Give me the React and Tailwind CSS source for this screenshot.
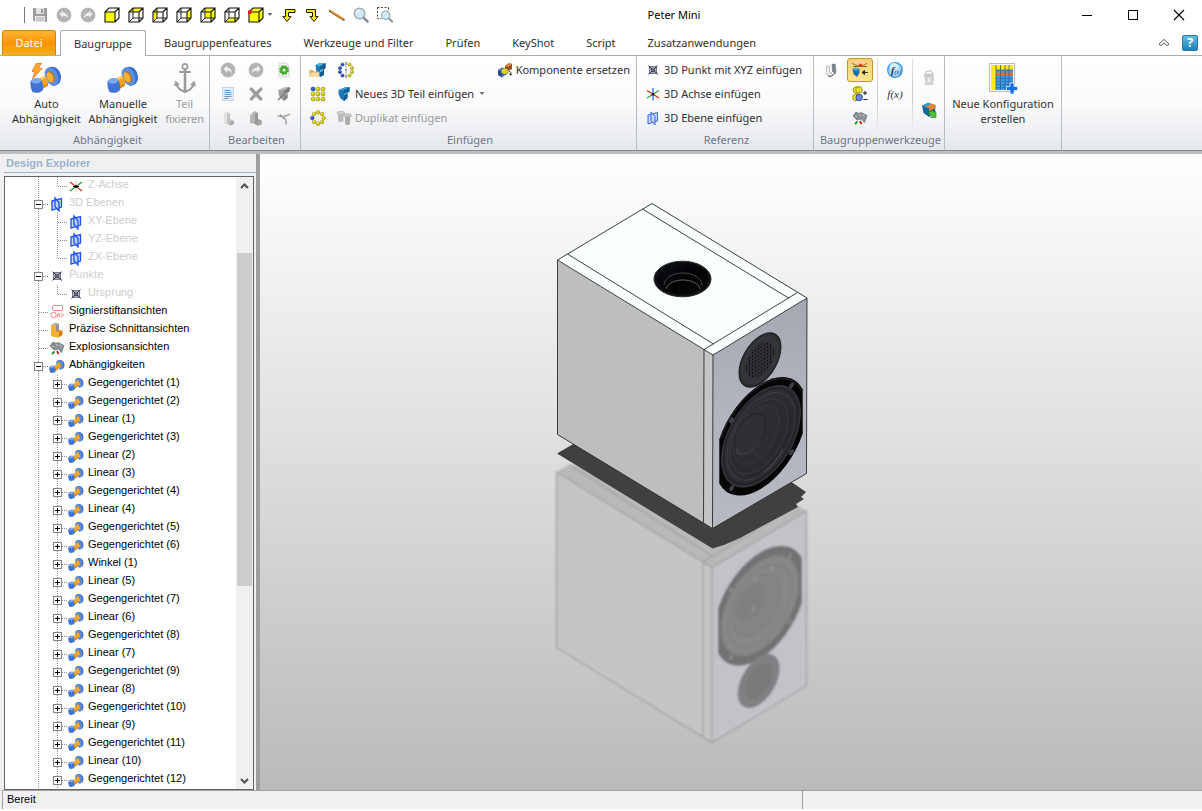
import React from "react";

/* ---------- quick access icons ---------- */

const CUBE_FACES = {
  front: "1,5 11,5 11,15 1,15",
  top: "1,5 5,1 15,1 11,5",
  left: "1,5 5,1 5,11 1,15",
  right: "11,5 15,1 15,11 11,15",
  back: "5,1 15,1 15,11 5,11",
  bottom: "1,15 5,11 15,11 11,15",
};

function CubeIcon({ face, solid, dot }) {
  return (
    <svg width="16" height="16" viewBox="0 0 16 16" aria-hidden="true">
      {solid && <polygon points="1,5 5,1 15,1 15,11 11,15 1,15" fill="#ffff00" />}
      <polygon points={CUBE_FACES[face]} fill="#ffff00" />
      <g fill="none" stroke="#111" strokeWidth="1.1">
        <path d="M1 5h10v10H1zM1 5l4-4h10v10l-4 4M11 5l4-4" />
        {!solid && face !== "front" && <path d="M5 1v10h10M5 11l-4 4" strokeWidth="0.9" />}
      </g>
      {dot && <rect x="0" y="3.5" width="3.5" height="3.5" fill="#ff1010" />}
    </svg>
  );
}

function SaveIcon() {
  return (
    <svg width="16" height="16" viewBox="0 0 16 16" aria-hidden="true">
      <path d="M1 1h14v14H3l-2-2z" fill="#9c9c9c" />
      <rect x="4" y="1" width="8" height="6" fill="#e4e4e4" />
      <rect x="9" y="2" width="2" height="4" fill="#9c9c9c" />
      <rect x="3" y="9" width="10" height="6" fill="#e8e8e8" />
      <path d="M4 11h8M4 13h8" stroke="#aaa" />
    </svg>
  );
}

function UndoIcon({ flip }) {
  return (
    <svg width="16" height="16" viewBox="0 0 16 16" aria-hidden="true">
      <circle cx="8" cy="8" r="7" fill="#b3b3b3" stroke="#a4a4a4" strokeWidth="0.6" />
      <path
        d={flip ? "M12.5 7 9 3.5v2.2C5.800 5.700 4 8 4.300 11.500 5.500 9.300 6.800 8.500 9 8.500v2.200z" : "M3.500 7 7 3.500v2.200c3.200 0 5 2.300 4.700 5.800C10.500 9.300 9.200 8.500 7 8.500v2.200z"}
        fill="#f1f1f1"
      />
    </svg>
  );
}

function TurnArrow({ flip }) {
  return (
    <svg width="16" height="16" viewBox="0 0 16 16" aria-hidden="true">
      <path
        d={flip ? "M1.500 2.500h9v7h2.500L9 14.500 5 9.500h2.500V5.500h-6z" : "M14 2.500H4.500v7H2L6 14.500l4-5H7.500V5.500H14z"}
        fill="#ffee00"
        stroke="#1a1a00"
      />
    </svg>
  );
}

function StickIcon() {
  return (
    <svg width="16" height="16" viewBox="0 0 16 16" aria-hidden="true">
      <path d="M1 4 14.500 12.500" stroke="#8f5b14" strokeWidth="2.400" strokeLinecap="round" />
      <path d="M1.300 3.700 14.300 12" stroke="#f0a93c" strokeWidth="1.200" />
    </svg>
  );
}

function LensIcon({ marquee }) {
  return (
    <svg width="16" height="16" viewBox="0 0 16 16" aria-hidden="true">
      {marquee && <path d="M.5 .5h11M.5 .5v11h4M11.500 .5v3" fill="none" stroke="#444" strokeDasharray="2 1.500" />}
      <g transform={marquee ? "translate(3.500 3) scale(.8)" : undefined}>
        <path d="m10 10 4.500 4.500" stroke="#8d9196" strokeWidth="2.600" strokeLinecap="round" />
        <circle cx="6.500" cy="6.500" r="5.200" fill="#cfeaf8" stroke="#9fa9b2" strokeWidth="1.500" />
        <path d="M4 6a3 3 0 0 1 3-3" fill="none" stroke="#fff" strokeWidth="1.200" />
      </g>
    </svg>
  );
}

/* ---------- ribbon icons ---------- */

function ConstraintIcon({ size = 32, bolt }) {
  return (
    <svg width={size} height={size} viewBox="0 0 32 32" aria-hidden="true">
      <path d="M16.500 7C19 3 25 2.500 28.500 7c3 4 3.500 10 .5 13.500-1.500 1.800-4 2-6.500 2.500z" fill="#3a6fd0" />
      <ellipse cx="21.500" cy="13.500" rx="6.300" ry="9.600" transform="rotate(-24 21.500 13.500)" fill="#5a8de6" />
      <ellipse cx="20.800" cy="14" rx="3.800" ry="6" transform="rotate(-24 20.800 14)" fill="#b97a1a" />
      <ellipse cx="20" cy="14.300" rx="2.900" ry="5.300" transform="rotate(-24 20 14.300)" fill="#f8b035" />
      <path d="M9 15.500 14.500 13c3 1.500 4.500 5.500 3.500 9.500L12.500 25z" fill="#f5a31c" />
      <path d="M9 15.500 14.500 13l1.800 1.500L10.500 17.500z" fill="#ffca62" />
      <path d="m12.500 23.500 5.500-3v2L12.500 26z" fill="#cf8412" />
      <path d="M.5 18.500C3 15 9 14 11.500 17.500c1.500 3 2 6.500 1.500 9.500C10.500 30 5.500 30.500 2.500 29 .8 26 .2 22 .5 18.500z" fill="#3f74d4" />
      <path d="M.5 18.500C3 15 9 14 11.500 17.500 10 21 4 22 .5 18.500z" fill="#7ca6f0" />
      {bolt && <path d="M6.500 0 11.500 0 8.500 5l3.500.5L2.500 16 5 8.500 2 8.500z" fill="#ffa630" stroke="#ee7420" strokeWidth=".8" />}
    </svg>
  );
}

function AnchorIcon() {
  return (
    <svg width="32" height="32" viewBox="0 0 32 32" fill="none" stroke="#9b9b9b" aria-hidden="true">
      <circle cx="16" cy="3.500" r="2.600" strokeWidth="1.600" />
      <path d="M11 9h10" strokeWidth="2" strokeLinecap="round" />
      <path d="M16 6v23" strokeWidth="2.600" />
      <path d="M7 20c1 5 4.500 7.500 9 9 4.500-1.500 8-4 9-9" strokeWidth="2" />
      <path d="m5.500 23 1-5 4 3.500zM26.500 23l-1-5-4 3.500z" fill="#9b9b9b" strokeWidth=".6" />
    </svg>
  );
}

function GearDocIcon() {
  return (
    <svg width="16" height="16" viewBox="0 0 16 16" aria-hidden="true">
      <path d="M3 1h7l3 3v11H3z" fill="#eef1ee" stroke="#d2d6d2" strokeWidth=".8" />
      <circle cx="8" cy="8" r="2.700" fill="none" stroke="#3fae2c" strokeWidth="2.400" />
      <circle cx="8" cy="8" r="4.200" fill="none" stroke="#3fae2c" strokeWidth="1.400" strokeDasharray="2 1.300" />
      <circle cx="8" cy="8" r="1.200" fill="#dff5da" />
    </svg>
  );
}

function ListDocIcon() {
  return (
    <svg width="16" height="16" viewBox="0 0 16 16" aria-hidden="true">
      <rect x="2.500" y="1.500" width="11" height="13" fill="#e3edf7" stroke="#c9d5e2" />
      <path d="M4.500 4.500h6M4.500 6.500h7M4.500 8.500h7M4.500 10.500h7M4.500 12.500h4" stroke="#6b95c2" />
    </svg>
  );
}

function DeleteIcon() {
  return (
    <svg width="16" height="16" viewBox="0 0 16 16" aria-hidden="true">
      <path d="M1 3 3.500 1l4.500 4.500L13 1l2 2L10.500 8l4.500 5-2.500 2-4.500-4.500L3.500 15l-2-2L5.500 8z" fill="#9d9d9d" />
    </svg>
  );
}

function PartIcon({ tone = "gray", slash }) {
  const c = tone === "blue" ? ["#3fa0d8", "#1f78b4", "#145a8c"] : ["#bdbdbd", "#a0a0a0", "#868686"];
  return (
    <svg width="16" height="16" viewBox="0 0 16 16" aria-hidden="true">
      <path d="m2.500 4 6-2.500L13.500 1v4.500L11.500 7v5L8 15l-3.500-2.500L2.500 8z" fill={c[1]} />
      <path d="m2.500 4 6-2.500L13.500 1 7.500 4.500z" fill={c[0]} />
      <path d="M7.500 4.500 13.500 1v4.500L10.500 7v1l1-.5V12L8 15z" fill={c[2]} />
      <path d="m8 7.500 3-1.500v2L8 9.500z" fill={c[0]} />
      {slash && <path d="m2 14 12-12" stroke="#777" strokeWidth="1.300" />}
    </svg>
  );
}

function BodyIcon({ dark }) {
  return (
    <svg width="16" height="16" viewBox="0 0 16 16" aria-hidden="true">
      <path d="m4 3 3-2 3 2v6l4 2v3l-4 1.500L4 13z" fill={dark ? "#b4b4b4" : "#e2e2e2"} />
      <path d="m7 4 3-1v6l4 2v3l-4 1.500-3-1.500z" fill={dark ? "#989898" : "#c4c4c4"} />
      <path d="m10 11 4 0v3l-4 1.500z" fill="#ababab" />
      {dark && <path d="M4 4v10l-2-1V5z" fill="#bbb" />}
    </svg>
  );
}

function BranchIcon() {
  return (
    <svg width="16" height="16" viewBox="0 0 16 16" fill="none" stroke="#969696" strokeWidth="1.300" aria-hidden="true">
      <path d="M1.500 5.500C5.500 7.500 9 7 14 4M6 7l4 3v4.500M4 4.500l3 3" />
      <circle cx="7.500" cy="7.300" r="1.200" fill="#ccc" strokeWidth=".8" />
    </svg>
  );
}

function OpenPartIcon() {
  return (
    <svg width="18" height="16" viewBox="0 0 18 16" aria-hidden="true">
      <path d="m6.500 3 4.500-2 5.500 0v5L15 7.500V13l-4 2-3.500-4z" fill="#1f78b4" />
      <path d="m6.500 3 4.500-2h5.500L11 4.500z" fill="#4bb0e2" />
      <path d="M11 4.500 16.500 1v5L15 7.500V13l-4 2z" fill="#145a8c" />
      <path d="m11 8 3-1.500V9l-3 1.500z" fill="#59b7e8" />
      <path d="M.5 8h3.500l1 1.500h5V15H.5z" fill="#e2ae5e" />
      <path d="M.5 15 2 10.500h8.500L10 15z" fill="#f9dba0" />
    </svg>
  );
}

function Ball({ x, y, blue, r = 2 }) {
  return (
    <g>
      <circle cx={x} cy={y} r={r} fill={blue ? "#1d3fb4" : "#c9be00"} stroke={blue ? "#14307e" : "#857c00"} strokeWidth=".5" />
      <circle cx={x - 0.4} cy={y - 0.5} r={r / 2} fill={blue ? "#5d82e8" : "#fbf23a"} />
    </g>
  );
}

function MirrorIcon() {
  const pts = [[4.500, 2.500], [2, 6], [2, 10], [4.500, 13.500]];
  return (
    <svg width="16" height="16" viewBox="0 0 16 16" aria-hidden="true">
      {pts.map(([x, y]) => <Ball key={"l" + y} x={x} y={y} blue r={1.6} />)}
      {pts.map(([x, y]) => <Ball key={"r" + y} x={16 - x} y={y} r={1.6} />)}
      <path d="M8 0v16" stroke="#333" strokeWidth=".9" strokeDasharray="3 1.200 1 1.200" />
    </svg>
  );
}

function GridPatternIcon() {
  const at = [3, 8, 13];
  return (
    <svg width="16" height="16" viewBox="0 0 16 16" aria-hidden="true">
      {at.flatMap((y) => at.map((x) => <Ball key={x + "-" + y} x={x} y={y} blue={x === 3 && y === 3} />))}
    </svg>
  );
}

function RingPatternIcon() {
  const pts = [[8, 2.300], [12, 4], [13.700, 8], [12, 12], [8, 13.700], [4, 12], [2.300, 8], [4, 4]];
  return (
    <svg width="16" height="16" viewBox="0 0 16 16" aria-hidden="true">
      {pts.map(([x, y], i) => <Ball key={i} x={x} y={y} blue={i === 6} r={1.8} />)}
    </svg>
  );
}

function DuplicateIcon() {
  return (
    <svg width="16" height="16" viewBox="0 0 16 16" aria-hidden="true">
      <path d="M2 3v8c1.500 1.500 4.500 1.500 5.500 0V3z" fill="#bdbdbd" />
      <ellipse cx="4.800" cy="3" rx="4" ry="1.800" fill="#cfcfcf" stroke="#adadad" strokeWidth=".6" />
      <path d="M9 6v8c1.300 1.200 4 1.200 5 0V6z" fill="#ababab" />
      <ellipse cx="11.500" cy="5.500" rx="4" ry="1.800" fill="#c9c9c9" stroke="#a1a1a1" strokeWidth=".6" />
    </svg>
  );
}

function ReplaceIcon() {
  return (
    <svg width="16" height="16" viewBox="0 0 16 16" aria-hidden="true">
      <path d="m8 4 4-3 3 1v5l-4 2-3-2z" fill="#9d4d1d" />
      <path d="m8 4 4-3 3 1-4 3z" fill="#d98846" />
      <path d="m1 8 4-2.500L10 7v5l-5 3.500L1 13z" fill="#4a6cc8" />
      <path d="m1 8 4 1.500V15L1 13z" fill="#2b4796" />
      <path d="m4 7.500 4-1.500 3 1.500v3.500L8 12.500 4.500 11z" fill="#d9d72c" stroke="#6b751c" strokeWidth=".6" />
      <path d="M12 9.500c2 0 2.500 1.500 1 3.500m0 0 .3-2m-.3 2 2-.5" stroke="#222" fill="none" strokeWidth=".9" />
    </svg>
  );
}

function PointIcon() {
  return (
    <svg width="16" height="16" viewBox="0 0 16 16" aria-hidden="true">
      <rect x="4.500" y="4.500" width="7" height="7" fill="#a9b4da" stroke="#5d6480" strokeWidth=".8" />
      <path d="m3.500 3.700 9.500 8.800M12.500 3.700 3.500 12.500" stroke="#1b1b1b" strokeWidth=".9" />
      <circle cx="8" cy="8.200" r="1.500" fill="#a9635a" stroke="#282828" strokeWidth=".6" />
    </svg>
  );
}

function AxisIcon() {
  return (
    <svg width="16" height="16" viewBox="0 0 16 16" fill="none" aria-hidden="true">
      <path d="M8 2v12.500" stroke="#3264f0" strokeWidth="1.300" />
      <path d="M2 4.500 8 8.300M8 8.300 14 12" stroke="#e32222" strokeWidth="1.200" />
      <path d="M14 4.500 8 8.300 2 12" stroke="#28993b" strokeWidth="1.200" />
      <circle cx="8" cy="8.300" r="1.200" fill="#111" />
    </svg>
  );
}

function TreeAxisIcon() {
  return (
    <svg width="16" height="16" viewBox="0 0 16 16" fill="none" aria-hidden="true">
      <path d="M8 3v11" stroke="#c9d2ec" />
      <path d="M2 4 14 13" stroke="#e32222" strokeWidth="1.200" />
      <path d="M14 4 2 13" stroke="#28993b" strokeWidth="1.200" />
      <path d="M5 8.500h6" stroke="#111" />
      <circle cx="8" cy="8.500" r="1.600" fill="#111" />
    </svg>
  );
}

function PlaneIcon({ bright }) {
  return (
    <svg width="16" height="16" viewBox="0 0 16 16" aria-hidden="true">
      <g fill="#c3d4fa" stroke={bright ? "#1b50f2" : "#3a6ae0"} strokeWidth={bright ? 1.3 : 1}>
        <path d="M3 5 12.500 2.500v8.500L3 14z" />
        <path d="M6 2v8.500l4 4.500V6.500z" fillOpacity=".7" />
      </g>
    </svg>
  );
}

function FastenersIcon() {
  return (
    <svg width="16" height="16" viewBox="0 0 16 16" aria-hidden="true">
      <path d="M2.500 4v7c0 3 4 4 6 2l-1.500-3c-1 .7-1.500.3-1.500-.5V4z" fill="#ededed" stroke="#b4b4b4" strokeWidth=".8" />
      <path d="M8 2.500 11 2l1 7.500L11 11l-2.500-1.500z" fill="#80868f" stroke="#646a73" strokeWidth=".6" />
      <path d="m4 13.500 2 1.500 6-4.500" fill="none" stroke="#444" strokeWidth=".9" />
    </svg>
  );
}

function LimitIcon() {
  return (
    <svg width="18" height="18" viewBox="0 0 18 18" aria-hidden="true">
      <path d="M1 2c4 3.500 12 3.500 15 0" fill="none" stroke="#9b7420" />
      <path d="M2 5.500h14" stroke="#6a5a20" strokeWidth=".9" />
      <path d="M11 11.500h6M11 11.500l2.500-2v4z" fill="#222" stroke="#222" strokeWidth=".9" />
      <circle cx="9.500" cy="4" r="1.500" fill="#e42f1f" />
      <path d="m1.500 8 3-1.500L8.500 8v4L6 16l-3.500-3z" fill="#1d6dad" />
      <path d="m1.500 8 3-1.500L8.500 8 5 10z" fill="#53a8dd" />
    </svg>
  );
}

function BooleanIcon() {
  return (
    <svg width="16" height="16" viewBox="0 0 16 16" strokeWidth=".9" aria-hidden="true">
      <g fill="#f5ea1c" stroke="#8e8500">
        <circle cx="4.500" cy="4" r="3.300" />
        <circle cx="7" cy="4" r="3.300" fillOpacity=".6" />
      </g>
      <circle cx="4" cy="11.500" r="3.300" fill="#f5ea1c" stroke="#8e8500" />
      <circle cx="7.200" cy="11.500" r="3.300" fill="#6d88e0" stroke="#2f4596" />
      <path d="M11 7h4M13 5v4M11.500 13.500h4" stroke="#222" strokeWidth="1.100" />
    </svg>
  );
}

function ExplodeIcon() {
  return (
    <svg width="16" height="16" viewBox="0 0 16 16" aria-hidden="true">
      <path d="M1 6 4 2l3 1.500 2-1 6 3-2.500 7L9.500 9 5 10z" fill="#8d9299" stroke="#666a70" strokeWidth=".7" />
      <path d="m7 4.500 2 1M10.500 5l2 1" stroke="#d8d8d8" strokeWidth=".8" />
      <circle cx="4" cy="6.500" r="1.200" fill="#ededed" stroke="#444" strokeWidth=".5" />
      <path d="m3 14 2.500-2.500" stroke="#1c9c33" strokeWidth="1.800" />
      <path d="m8 11 1.500 3" stroke="#db2020" strokeWidth="1.800" />
    </svg>
  );
}

function FunctionBadge() {
  return (
    <svg width="18" height="18" viewBox="0 0 18 18" aria-hidden="true">
      <circle cx="9" cy="9" r="7.300" fill="#a5d8fa" stroke="#3d9be6" strokeWidth="1.400" />
      <circle cx="8" cy="6" r="4" fill="#d8f0ff" />
      <text x="5" y="12.500" fontFamily="Liberation Serif, serif" fontStyle="italic" fontWeight="bold" fontSize="10" fill="#20364c">f</text>
      <text x="8.500" y="13" fontFamily="Liberation Serif, serif" fontStyle="italic" fontSize="6" fill="#20364c">(x)</text>
    </svg>
  );
}

function BucketIcon() {
  return (
    <svg width="16" height="18" viewBox="0 0 16 18" aria-hidden="true">
      <path d="M4 7C3 1 12 0 12 6" fill="none" stroke="#c9c9c9" strokeWidth="1.200" />
      <ellipse cx="8" cy="6.500" rx="5" ry="2" fill="#c8c8c8" />
      <path d="M3 7h10v5l-1 1 1 3H3l1.500-3z" fill="#d2d2d2" />
      <path d="M6.500 9h3v4h-3z" fill="#ededed" />
    </svg>
  );
}

function BoxImportIcon() {
  return (
    <svg width="16" height="16" viewBox="0 0 16 16" aria-hidden="true">
      <path d="m1 3.500 6-3 7.500 2.500L8 6z" fill="#3c97c9" />
      <path d="m1 3.500 7 2.500V15L2.500 11z" fill="#1a6698" />
      <path d="m8 6 6.500-3-.5 7-6 5z" fill="#1b5a86" />
      <path d="m4.500 4.700 6-3 4 1.300L8 6zM8 6l6.500-3v3L8 9.500z" fill="#e08636" />
      <path d="M8 10.500c2-2 4-2 5-.5l2-.5v6H9.500l1.500-2c-1-1.500-2-1.500-3-.5z" fill="#48c336" stroke="#2a8b20" strokeWidth=".6" />
    </svg>
  );
}

function ConfigTableIcon() {
  return (
    <svg width="32" height="32" viewBox="0 0 32 32" aria-hidden="true">
      <rect x="2.500" y=".5" width="25" height="28" fill="#fff" stroke="#b9b9b9" />
      <rect x="4" y="2" width="5" height="25" fill="#ffe81a" />
      <rect x="9" y="2" width="17" height="5" fill="#ffe81a" />
      <rect x="9" y="7" width="17" height="20" fill="#3d9ae6" />
      <rect x="9" y="9.500" width="17" height="3" fill="#f4682a" />
      <path d="M9 2v25M13.500 2v25M18 2v25M22 2v25M9 7h17" stroke="#3c6074" strokeWidth=".8" />
      <path d="M9 15.500h17M9 18.500h17M9 21.500h17M9 24.500h17" stroke="#1f75c0" strokeWidth=".8" />
      <path d="M23 20h4v3.500h3.500v4H27V31h-4v-3.500h-3.500v-4H23z" fill="#1a70e2" stroke="#fff" strokeWidth=".7" />
    </svg>
  );
}

function MarkupIcon() {
  return (
    <svg width="16" height="16" viewBox="0 0 16 16" fill="none" stroke="#f0767e" strokeWidth=".9" aria-hidden="true">
      <rect x="3.500" y="1.500" width="10" height="5" rx="1" />
      <circle cx="4.500" cy="11" r="2.700" />
      <path d="m8 13.500 1.500-4.500 1.500 4.500M12 9l2.500 2-2.500 2" />
    </svg>
  );
}

function SectionIcon() {
  return (
    <svg width="16" height="16" viewBox="0 0 16 16" aria-hidden="true">
      <path d="M2.500 3 6 1l4 1v6l3.500 1v4l-4 2.500-7-1.500z" fill="#cf7d0b" />
      <path d="M2.500 3H7v6.500h3v6l-5-.5-2.500-2z" fill="#fbb12c" />
      <path d="M7 3.500 10 2v6L7 9.500z" fill="#8995a6" />
      <path d="m7 9.500 3-1.500 3.500 1L10 10.500z" fill="#e0951f" />
      <path d="m2.500 3 3.500-2 4 1-3 1.500z" fill="#a4afbf" />
    </svg>
  );
}

/* ---------- data ---------- */

const quickTools = [
  ["Speichern", <SaveIcon />],
  ["Rückgängig", <UndoIcon />],
  ["Wiederholen", <UndoIcon flip />],
  ["Vorderansicht", <CubeIcon face="front" />],
  ["Draufsicht", <CubeIcon face="top" />],
  ["Linke Ansicht", <CubeIcon face="left" />],
  ["Rechte Ansicht", <CubeIcon face="right" />],
  ["Rückansicht", <CubeIcon face="back" />],
  ["Unteransicht", <CubeIcon face="bottom" />],
];

const laterTools = [
  ["Zurück drehen", <TurnArrow />],
  ["Vorwärts drehen", <TurnArrow flip />],
  ["Messen", <StickIcon />],
  ["Zoom", <LensIcon />],
  ["Zoomfenster", <LensIcon marquee />],
];

const tabs = ["Baugruppenfeatures", "Werkzeuge und Filter", "Prüfen", "KeyShot", "Script", "Zusatzanwendungen"];

const editTools = [
  ["Rückgängig", <UndoIcon />],
  ["Wiederholen", <UndoIcon flip />],
  ["Neu erzeugen", <GearDocIcon />],
  ["Eigenschaften", <ListDocIcon />],
  ["Löschen", <DeleteIcon />],
  ["Unterdrücken", <PartIcon slash />],
  ["Körper", <BodyIcon />],
  ["Teil bearbeiten", <BodyIcon dark />],
  ["Verzweigung", <BranchIcon />],
];

const constraints = [
  "Gegengerichtet (1)", "Gegengerichtet (2)", "Linear (1)", "Gegengerichtet (3)", "Linear (2)", "Linear (3)",
  "Gegengerichtet (4)", "Linear (4)", "Gegengerichtet (5)", "Gegengerichtet (6)", "Winkel (1)", "Linear (5)",
  "Gegengerichtet (7)", "Linear (6)", "Gegengerichtet (8)", "Linear (7)", "Gegengerichtet (9)", "Linear (8)",
  "Gegengerichtet (10)", "Linear (9)", "Gegengerichtet (11)", "Linear (10)", "Gegengerichtet (12)",
];

const treeRows = [
  { level: 2, label: "Z-Achse", icon: <TreeAxisIcon />, dim: true, last: true },
  { level: 1, label: "3D Ebenen", icon: <PlaneIcon bright />, dim: true, mark: "minus" },
  { level: 2, label: "XY-Ebene", icon: <PlaneIcon bright />, dim: true },
  { level: 2, label: "YZ-Ebene", icon: <PlaneIcon bright />, dim: true },
  { level: 2, label: "ZX-Ebene", icon: <PlaneIcon bright />, dim: true, last: true },
  { level: 1, label: "Punkte", icon: <PointIcon />, dim: true, mark: "minus" },
  { level: 2, label: "Ursprung", icon: <PointIcon />, dim: true, last: true },
  { level: 1, label: "Signierstiftansichten", icon: <MarkupIcon /> },
  { level: 1, label: "Präzise Schnittansichten", icon: <SectionIcon /> },
  { level: 1, label: "Explosionsansichten", icon: <ExplodeIcon /> },
  { level: 1, label: "Abhängigkeiten", icon: <ConstraintIcon size={16} />, mark: "minus" },
  ...constraints.map((label) => ({ level: 2, label, icon: <ConstraintIcon size={16} />, mark: "plus" })),
];

/* ---------- building blocks ---------- */

function IconButton({ label, children, className = "h-6 w-6" }) {
  return (
    <button type="button" aria-label={label} className={`flex shrink-0 items-center justify-center ${className}`}>
      {children}
    </button>
  );
}

function TextButton({ icon, children, dim, menu }) {
  return (
    <button type="button" className={`flex h-6 items-center gap-[3px] whitespace-nowrap ${dim ? "text-[#9a9a9a]" : ""}`}>
      {icon}
      <span>{children}</span>
      {menu && <Caret />}
    </button>
  );
}

function LargeButton({ icon, lines, dim }) {
  return (
    <button type="button" className={`flex flex-col items-center whitespace-nowrap pt-[5px] leading-[15px] ${dim ? "text-[#9a9a9a]" : ""}`}>
      <span className="mb-px">{icon}</span>
      {lines.map((line) => (
        <span key={line}>{line}</span>
      ))}
    </button>
  );
}

function Caret() {
  return (
    <svg width="6" height="4" viewBox="0 0 6 4" className="ml-[2px] shrink-0" aria-hidden="true">
      <path d="M.5 0h5L3 3z" fill="#6e6e6e" />
    </svg>
  );
}

function Group({ title, className = "", children }) {
  return (
    <section className={`flex shrink-0 flex-col border-r border-[#b9bdc3] ${className}`}>
      <div className="flex-1 pt-[2px]">{children}</div>
      {title && <h2 className="h-5 pl-[3px] text-center leading-[19px] text-[#6f7688]">{title}</h2>}
    </section>
  );
}

function TreeCell({ down = true, branch, mark }) {
  return (
    <svg width="19" height="18" viewBox="0 0 19 18" className="shrink-0" shapeRendering="crispEdges" aria-hidden="true">
      <g stroke="#8c8c8c" strokeDasharray="1 1" fill="none">
        <path d="M9.500 0v9" />
        {down && <path d="M9.500 10v8" />}
        {branch && <path d="M10 9.500h9" />}
      </g>
      {mark && (
        <>
          <rect x="5.500" y="5.500" width="8" height="8" fill="#fff" stroke="#848484" />
          <path d={mark === "plus" ? "M7 9.500h5M9.500 7v5" : "M7 9.500h5"} stroke="#000" />
        </>
      )}
    </svg>
  );
}

function TreeRow({ level, label, icon, dim, mark, last }) {
  return (
    <li className="flex h-[18px] items-start pl-6">
      {level === 2 && <TreeCell />}
      <TreeCell branch mark={mark} down={!last} />
      <span className="mt-px ml-px shrink-0">{icon}</span>
      <span className={`ml-1 whitespace-nowrap leading-[14px] ${dim ? "text-[#cdcdcd]" : "text-black"}`}>{label}</span>
    </li>
  );
}

/* ---------- 3D model ---------- */

function Woofer({ x, y }) {
  return (
    <g transform={`matrix(1 -.6 0 1.14 ${x} ${y})`}>
      <path d="M-41.700 -19.400A46 46 0 0 1 41.700 -19.400V19.400A46 46 0 0 1 -41.700 19.400Z" fill="#050506" />
      <path d="M-40.500 -19A44.700 44.700 0 0 1 40.500 -19" fill="none" stroke="#333436" strokeWidth=".7" />
      <circle r="39.500" fill="#292a2d" stroke="#3e4043" strokeWidth=".7" />
      <circle r="37" fill="url(#cone)" stroke="#202124" strokeWidth=".8" />
      <circle r="34" fill="none" stroke="#3b3d41" strokeWidth=".8" />
      <circle cx="-2" cy="-1" r="29" fill="#2a2b2f" stroke="#393b40" strokeWidth=".7" />
      <circle cx="-5" cy="-4" r="23" fill="#2c2d31" stroke="#37393d" strokeWidth=".7" />
      <circle cx="-11" cy="-8" r="15.500" fill="#2e3034" stroke="#232427" strokeWidth=".9" />
      <path d="M-25 -3a14 12 0 0 0 24 7" fill="none" stroke="#3f4146" strokeWidth="1.100" />
      <path d="M-6 12 4 26M0 -36 3 -30" stroke="#383a3e" strokeWidth=".7" />
      <path d="M3 33Q14 31 22 23" fill="none" stroke="#55585d" strokeWidth=".9" />
      {[[-29.500, -29.500], [30.500, -28.500], [-29.500, 30], [30.500, 30]].map(([sx, sy]) => (
        <circle key={sx + "/" + sy} cx={sx} cy={sy} r="2" fill="#3a3c3e" stroke="#57595b" strokeWidth=".5" />
      ))}
    </g>
  );
}

function GhostWoofer({ x, y }) {
  return (
    <g transform={`matrix(1 -.6 0 1.14 ${x} ${y})`}>
      <path d="M-42 -19.400A46 46 0 0 1 42 -19.400V19.400A46 46 0 0 1 -42 19.400Z" fill="#727273" />
      <circle r="39" fill="#868788" stroke="#7b7b7c" />
      <circle r="32" fill="none" stroke="#7f8081" strokeWidth="1.200" />
      <circle cx="-3" cy="-2" r="24" fill="#838485" stroke="#7d7e7f" />
      <circle cx="-9" cy="-8" r="14" fill="#7f8081" />
      <path d="M-8 1-5-2M-6 -25-3-26M10 -27 14-26" stroke="#959698" strokeWidth="2.200" />
      {[[-29, -29], [30, -28], [-29, 30], [30, 30]].map(([sx, sy]) => (
        <circle key={sx + "/" + sy} cx={sx} cy={sy} r="2" fill="#898a8a" />
      ))}
    </g>
  );
}

function SpeakerModel() {
  return (
    <svg width="280" height="570" viewBox="540 190 280 570" role="img" aria-label="Lautsprecher">
      <defs>
        <linearGradient id="front" x1="0" y1="0" x2="0" y2="1">
          <stop offset="0" stopColor="#a6a8b1" />
          <stop offset=".5" stopColor="#b3b5be" />
          <stop offset="1" stopColor="#b7b9c2" />
        </linearGradient>
        <linearGradient id="cone" x1="0" y1="0" x2="1" y2="1">
          <stop offset="0" stopColor="#303236" />
          <stop offset="1" stopColor="#252629" />
        </linearGradient>
        <linearGradient id="bore" x1="0" y1="0" x2="1" y2="1">
          <stop offset="0" stopColor="#10131f" />
          <stop offset=".5" stopColor="#020203" />
          <stop offset="1" stopColor="#0a0a0a" />
        </linearGradient>
        <pattern id="grille" width="3" height="3" patternUnits="userSpaceOnUse">
          <circle cx="1.500" cy="1.500" r=".85" fill="#08090a" />
        </pattern>
        <filter id="soft" x="-5%" y="-5%" width="110%" height="110%">
          <feGaussianBlur stdDeviation=".8" />
        </filter>
        <filter id="edge" x="-5%" y="-5%" width="110%" height="110%">
          <feGaussianBlur stdDeviation=".5" />
        </filter>
      </defs>

      {/* floor reflection */}
      <g filter="url(#soft)">
        <path d="M556.500 472 570 464 700 500 792 502 806.500 511 712 567.500z" fill="#b9b9b9" />
        <path d="M556.500 472 712 567.500V742.500L556.500 647.500z" fill="#c5c5c5" />
        <path d="M712 567.500 806.500 511 805.700 686 712 742.500z" fill="#c2c3c9" />
        <g fill="none" stroke="#9d9d9d" strokeWidth="1.200">
          <path d="M556.500 472 712 567.500 806.500 511V686L712 742.500 556.500 647.500zM712 567.500v175M703 562v175M570 465l142 91M703 562l90-54" />
        </g>
        <GhostWoofer x={760} y={605.7} />
        <g transform="matrix(1 -.6 0 1.14 758.700 681)">
          <circle r="21" fill="#7f8081" />
          <circle r="14" fill="#797a7b" />
        </g>
      </g>

      {/* contact shadow */}
      <path d="M557 453.500 575 443 712 510 790 481 806 492 801 497 804 499 796 504 798 507 740 538 724 545 712.500 548.500z" fill="#414141" filter="url(#edge)" />

      {/* cabinet */}
      <path d="M557.500 260 713 355 712.500 528.500 557.500 434.500z" fill="#bebebe" />
      <path d="M704 350 713 355 712.500 528.500 703.500 522.500z" fill="#c5c5c5" />
      <path d="M713 355 807 298 806.500 473.500 712.500 528.500z" fill="url(#front)" />
      <path d="M557.500 260 652 203.500 807 298 713 355z" fill="#f8fffe" />
      <g fill="none" stroke="#2b2b2b" strokeWidth=".9">
        <path d="M557.500 260 652 203.500 807 298 806.500 473.500 712.500 528.500 557.500 434.500zM557.500 260 713 355 807 298M713 355 712.500 528.500" />
        <path d="M567.500 254 713.500 344M642.500 209 788.500 298M797.500 292.500 704 349.500 703.500 522.500" />
      </g>

      {/* bass port */}
      <ellipse cx="682.500" cy="279" rx="28.500" ry="17.800" fill="#111" stroke="#2a2a2a" />
      <ellipse cx="682.500" cy="278.500" rx="26" ry="15.800" fill="url(#bore)" />
      <path d="M664 285c1-16 37-16 38 0" fill="none" stroke="#4c4c4c" strokeWidth=".9" />
      <path d="M666 289c3-12 31-12 34 0" fill="none" stroke="#6c6c6c" strokeWidth=".9" />

      {/* drivers */}
      <g transform="matrix(1 -.6 0 1.14 760 360)">
        <circle r="21" fill="#2c2e31" stroke="#1d1e20" />
        <circle r="18" fill="#313336" stroke="#3d4043" strokeWidth=".7" />
        <circle r="14" fill="url(#grille)" />
      </g>
      <Woofer x={761} y={436.3} />
    </svg>
  );
}

/* ---------- page ---------- */

export default function App() {
  return (
    <div className="flex min-h-screen w-full flex-col bg-white font-['Noto_Sans',sans-serif] text-[11px] text-[#303030]">
      <header>
        <div className="flex h-[30px] items-center">
          <div className="mr-[3px] ml-6 h-4 w-px bg-[#777]" />
          <nav aria-label="Schnellzugriff" className="flex shrink-0 items-center">
            {quickTools.map(([label, icon]) => (
              <IconButton key={label} label={label}>{icon}</IconButton>
            ))}
            <button type="button" aria-label="Ansichten" className="mr-1 flex h-6 items-center gap-px pl-1">
              <CubeIcon face="front" solid dot />
              <Caret />
            </button>
            {laterTools.map(([label, icon]) => (
              <IconButton key={label} label={label}>{icon}</IconButton>
            ))}
          </nav>
          <h1 className="flex-1 pr-[113px] text-center text-black">Peter Mini</h1>
          <IconButton label="Minimieren" className="h-[30px] w-[46px]">
            <svg width="12" height="12" shapeRendering="crispEdges"><path d="M1 6.500h10" stroke="#000" /></svg>
          </IconButton>
          <IconButton label="Maximieren" className="h-[30px] w-[46px]">
            <svg width="12" height="12" shapeRendering="crispEdges"><rect x="1.500" y="1.500" width="9" height="9" fill="none" stroke="#000" /></svg>
          </IconButton>
          <IconButton label="Schließen" className="h-[30px] w-[46px]">
            <svg width="12" height="12"><path d="m1 1 10 10M11 1 1 11" stroke="#000" strokeWidth="1.100" /></svg>
          </IconButton>
        </div>

        <div className="flex h-[26px] items-end border-b border-[#a9adb3] pl-[2px]">
          <button type="button" className="h-[25px] w-[54px] rounded-t-[3px] border border-b-0 border-[#d98200] bg-linear-to-b from-[#ffb62e] via-[#f79400] to-[#ffae1c] text-white">Datei</button>
          <button type="button" className="-mb-px ml-1 h-[26px] w-[86px] rounded-t-[3px] border border-b-0 border-[#a9adb3] bg-white pt-px">Baugruppe</button>
          <div className="flex h-[25px] pt-[2px] pl-[2px]">
            {tabs.map((tab) => (
              <button key={tab} type="button" className="px-4">{tab}</button>
            ))}
          </div>
          <div className="ml-auto flex h-[25px] items-center gap-3 pr-1">
            <button type="button" aria-label="Menüband minimieren">
              <svg width="12" height="10" viewBox="0 0 12 10"><path d="M1.500 7V5.500L6 1.500l4.500 4V7l-1.500.5L6 5 3 7.500z" fill="#fff" stroke="#555c66" /></svg>
            </button>
            <button type="button" aria-label="Hilfe" className="flex h-4 w-4 items-center justify-center rounded-[2px] border border-[#2a78a8] bg-linear-to-b from-[#65bce6] to-[#1c7fb8] text-[13px] leading-none font-bold text-white">?</button>
          </div>
        </div>

        <div className="flex h-[94px] bg-linear-to-b from-white via-[#fbfbfc] to-[#e5e8ec]">
          <Group title="Abhängigkeit" className="ml-[3px] w-[207px]">
            <div className="flex justify-between pr-[5px] pl-[9px]">
              <LargeButton icon={<ConstraintIcon bolt />} lines={["Auto", "Abhängigkeit"]} />
              <LargeButton icon={<ConstraintIcon />} lines={["Manuelle", "Abhängigkeit"]} />
              <LargeButton icon={<AnchorIcon />} lines={["Teil", "fixieren"]} dim />
            </div>
          </Group>

          <Group title="Bearbeiten" className="w-[91px]">
            <div className="ml-1 grid w-[84px] grid-cols-3 justify-items-center">
              {editTools.map(([label, icon]) => (
                <IconButton key={label} label={label}>{icon}</IconButton>
              ))}
            </div>
          </Group>

          <Group title="Einfügen" className="w-[336px]">
            <div className="flex pr-[6px] pl-[5px]">
              <div className="mr-1">
                <IconButton label="Teil einfügen"><OpenPartIcon /></IconButton>
                <IconButton label="Rechteckmuster"><GridPatternIcon /></IconButton>
                <IconButton label="Kreismuster"><RingPatternIcon /></IconButton>
              </div>
              <div className="ml-[2px]">
                <IconButton label="Spiegeln" className="h-6 w-5"><MirrorIcon /></IconButton>
                <TextButton icon={<PartIcon tone="blue" />} menu>Neues 3D Teil einfügen</TextButton>
                <TextButton icon={<DuplicateIcon />} dim>Duplikat einfügen</TextButton>
              </div>
              <div className="ml-auto">
                <TextButton icon={<ReplaceIcon />}>Komponente ersetzen</TextButton>
              </div>
            </div>
          </Group>

          <Group title="Referenz" className="w-[177px]">
            <div className="pl-2">
              <TextButton icon={<PointIcon />}>3D Punkt mit XYZ einfügen</TextButton>
              <TextButton icon={<AxisIcon />}>3D Achse einfügen</TextButton>
              <TextButton icon={<PlaneIcon />}>3D Ebene einfügen</TextButton>
            </div>
          </Group>

          <Group title="Baugruppenwerkzeuge" className="w-[131px]">
            <div className="flex pl-[6px]">
              <IconButton label="Verbindungen"><FastenersIcon /></IconButton>
              <div className="ml-[3px]">
                <IconButton label="Grenzen" className="h-6 w-[26px] rounded-[3px] border border-[#c29b29] bg-linear-to-b from-[#f9d07a] to-[#ffe58a]"><LimitIcon /></IconButton>
                <IconButton label="Boolesche Operation" className="h-6 w-[26px]"><BooleanIcon /></IconButton>
                <IconButton label="Explosion" className="h-6 w-[26px]"><ExplodeIcon /></IconButton>
              </div>
              <div className="mx-1 w-px bg-linear-to-b from-[#e6e6e6] via-[#c9c9c9] to-[#f0f0f0]" />
              <div className="w-[26px]">
                <IconButton label="Funktion" className="h-6 w-[26px]"><FunctionBadge /></IconButton>
                <button type="button" className="h-6 w-[26px] text-center font-['Liberation_Serif',serif] text-[11px] italic">f(x)</button>
              </div>
              <div className="mx-1 w-px bg-linear-to-b from-[#e6e6e6] via-[#c9c9c9] to-[#f0f0f0]" />
              <div className="pt-1">
                <IconButton label="Material" className="h-8 w-6"><BucketIcon /></IconButton>
                <IconButton label="Importieren" className="h-8 w-6"><BoxImportIcon /></IconButton>
              </div>
            </div>
          </Group>

          <Group className="w-[117px]">
            <div className="flex justify-center">
              <LargeButton icon={<ConfigTableIcon />} lines={["Neue Konfiguration", "erstellen"]} />
            </div>
          </Group>
        </div>
        <div className="h-1 border-t border-[#878c93] bg-[#bbbdc1]" />
      </header>

      <div className="flex flex-1">
        <aside className="flex w-[260px] shrink-0 flex-col border-r-4 border-[#9f9f9f] bg-[#f0f0f0] font-['Liberation_Sans',sans-serif] text-[11px]">
          <h2 className="ml-1 h-[19px] border-b border-[#99b4d1] pl-[2px] leading-[18px] font-bold text-[#99b4d1]">Design Explorer</h2>
          <div className="mt-[3px] mr-[2px] ml-1 flex flex-1 border border-[#646464] bg-white">
            <ul className="min-w-0 flex-1 overflow-hidden">
              {treeRows.map((row) => (
                <TreeRow key={row.label} {...row} />
              ))}
            </ul>
            <div className="flex w-[17px] flex-col items-center bg-[#f0f0f0]">
              <button type="button" aria-label="Nach oben" className="flex h-[17px] w-full items-center justify-center">
                <svg width="9" height="6"><path d="M1 5 4.500 1.500 8 5" fill="none" stroke="#505050" strokeWidth="2" /></svg>
              </button>
              <div className="w-full flex-[59]" />
              <div className="w-[15px] flex-[333] bg-[#cdcdcd]" />
              <div className="w-full flex-[186]" />
              <button type="button" aria-label="Nach unten" className="flex h-[17px] w-full items-center justify-center">
                <svg width="9" height="6"><path d="M1 1 4.500 4.500 8 1" fill="none" stroke="#505050" strokeWidth="2" /></svg>
              </button>
            </div>
          </div>
        </aside>

        <main className="flex-1 overflow-hidden bg-linear-to-b from-white to-[#bababa] pt-9 pl-[280px]">
          <SpeakerModel />
        </main>
      </div>

      <footer className="flex h-[21px] border-b-2 border-white bg-[#f0f0f0] pl-[2px] font-['Liberation_Sans',sans-serif] text-[11px] leading-[16px] text-black">
        <div className="w-[800px] border-t border-l border-[#a0a0a0] pl-1">Bereit</div>
        <div className="flex-1 border-t border-l border-[#a0a0a0]" />
      </footer>
    </div>
  );
}
